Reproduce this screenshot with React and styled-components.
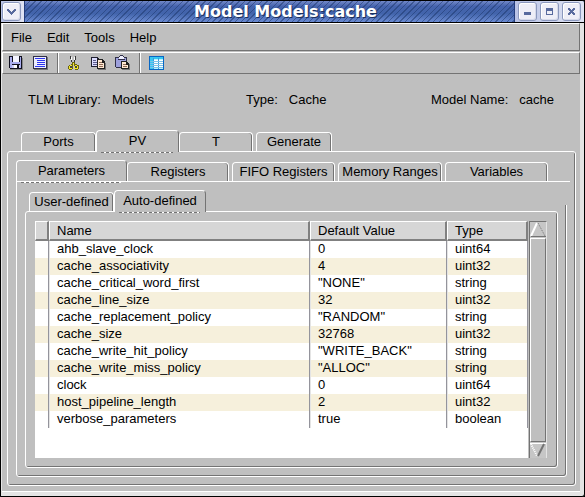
import React from 'react';
import styled, { createGlobalStyle, css } from 'styled-components';

const face = '#bfbfbf';
const dark = '#737373';

const GlobalStyle = createGlobalStyle`
  *, *::before, *::after { box-sizing: border-box; }
  body { margin: 0; background: #000; }
  button { font: inherit; color: inherit; }
`;

const Window = styled.main`
  min-height: 100vh;
  display: flex;
  flex-direction: column;
  border: 1px solid #000;
  border-radius: 0 3px 3px 0;
  background: #e4e4e4;
  color: #000;
  font: 13px/17px "Liberation Sans", Arial, sans-serif;
  overflow: hidden;
`;

const TitleBar = styled.header`
  display: flex;
  height: 22px;
  border-bottom: 1px solid #000;
  background:
    repeating-linear-gradient(135deg, rgba(27, 53, 105, 0.5) 0 1px, transparent 1px 4px),
    linear-gradient(#7389c9, #4563ad 25%, #4264ab 60%, #6b8bd2);
`;

const TitleButtons = styled.div`
  display: flex;
  gap: 3px;
  padding: ${(p) => (p.$end ? '1px 3px 1px 3px' : '1px 3px 1px 1px')};
  background: linear-gradient(90deg, #b9c3e6, #e0e4f4);
  border: 0 solid #233c7c;
  border-width: ${(p) => (p.$end ? '0 0 0 1px' : '0 1px 0 0')};
`;

const TitleButton = styled.button`
  display: flex;
  align-items: center;
  justify-content: center;
  width: 19px;
  height: 19px;
  padding: 0;
  border: 1px solid #8b98be;
  border-radius: 3px;
  background: #eeeef7;
  box-shadow: inset 1px 1px #fff, inset -1px -1px #d5d9ea;
`;

const Title = styled.h1`
  flex: 1;
  margin: 0;
  padding-left: 32px;
  text-align: center;
  color: #fff;
  font: bold 16px/21px "DejaVu Sans", Verdana, sans-serif;
  text-shadow: 1px 1px #1c2f5c;
  white-space: nowrap;
`;

const Body = styled.div`
  flex: 1;
  display: flex;
  flex-direction: column;
  margin: 0 4px 4px 1px;
  background: ${face};
  border-bottom: 1px solid #fff;
`;

const bar = css`
  display: flex;
  align-items: center;
  border: 1px solid;
  border-color: #fff ${dark} ${dark} #fff;
`;

const MenuBar = styled.nav`
  ${bar}
  height: 28px;
  padding: 0 8px;
  gap: 15px;
  margin-bottom: 1px;
`;

const MenuItem = styled.button`
  border: 0;
  padding: 0;
  background: none;
`;

const ToolBar = styled.div`
  ${bar}
  height: 22px;
  padding: 0 6px;
  gap: 8px;
`;

const ToolButton = styled.button`
  display: block;
  width: 16px;
  height: 16px;
  padding: 0;
  border: 0;
  background: none;
`;

const Separator = styled.span`
  width: 2px;
  align-self: stretch;
  background: linear-gradient(90deg, ${dark} 50%, #fff 50%);
`;

const Info = styled.dl`
  display: grid;
  grid-template-columns: 218fr 185fr auto;
  margin: 17px 26px 22px;
`;

const Pair = styled.div`
  display: flex;
  gap: 11px;
  dd, dt { margin: 0; }
`;

const Notebook = styled.section`
  flex: 1;
  display: flex;
  flex-direction: column;
  margin: ${(p) => (p.$outer ? '0 4px 5px 5px' : '0')};
`;

const TabList = styled.div`
  display: flex;
  align-items: flex-end;
  height: 21px;
  padding-left: ${(p) => p.$inset}px;
`;

const Tab = styled.button`
  width: ${(p) => p.$width}px;
  height: 19px;
  margin: 0 ${(p) => p.$gap || 0}px 0 0;
  padding: 0 0 2px;
  border: 1px solid #fff;
  border-bottom: 0;
  border-radius: 4px 4px 0 0;
  background: ${face};
  box-shadow: inset -1px 0 ${dark};
  line-height: 15px;
  white-space: nowrap;

  &[aria-selected='true'] {
    position: relative;
    height: 22px;
    margin-bottom: -1px;
    border-right-color: ${dark};
    box-shadow: none;
  }

  &[aria-selected='true']::after {
    content: '';
    position: absolute;
    left: 4px;
    right: 5px;
    bottom: -1px;
    height: 1px;
    background: repeating-linear-gradient(90deg, ${dark} 0 3px, #fff 3px 5px);
  }
`;

const Panel = styled.div`
  flex: 1;
  display: flex;
  flex-direction: column;
  border: 1px solid #fff;
  border-radius: ${(p) => (p.$open ? '0 0 3px 3px' : '3px')};
  box-shadow: inset -1px -1px ${dark};
  padding: ${(p) => p.$pad};

  ${(p) => p.$open && css`
    position: relative;
    &::after {
      content: '';
      position: absolute;
      top: -1px;
      right: -4px;
      width: 5px;
      height: 24px;
      border-top: 1px solid #fff;
      background: ${face};
    }
  `}
`;

const TableArea = styled.div`
  flex: 1;
  display: flex;
`;

const TableView = styled.div`
  flex: 1;
  background: #fff;
`;

const Table = styled.table`
  width: 100%;
  table-layout: fixed;
  border-collapse: separate;
  border-spacing: 0;
`;

const Col = styled.col`
  width: ${(p) => (p.$width ? `${p.$width}px` : 'auto')};
`;

const HeadCell = styled.th`
  height: 20px;
  padding: 0 0 0 7px;
  text-align: left;
  font-weight: normal;
  line-height: 17px;
  background: #d6d6d6;
  border: solid;
  border-width: 1px 2px 2px 1px;
  border-color: #fff #808080 #808080 #fff;
`;

const Row = styled.tr`
  &:nth-child(even) { background: #f6f0dc; }
`;

const Cell = styled.td`
  height: 17px;
  padding: 0 0 2px 7px;
  line-height: 15px;
  white-space: nowrap;
  border-left: 1px solid #e4e4e4;
  border-right: 1px solid #94949c;
  &:first-child { border-left: 0; }
`;

const ScrollBar = styled.div`
  display: flex;
  flex-direction: column;
  width: 18px;
  margin-left: 1px;
  border: 1px solid;
  border-width: 1px 1px 0 1px;
  border-color: ${dark} #e4e4e4 #e4e4e4 ${dark};
  background: #aaa;
`;

const Arrow = styled.button`
  display: block;
  height: 16px;
  padding: 0;
  border: 0;
  background: #c6c6c6;
`;

const Thumb = styled.div`
  flex: 1;
  background: ${face};
  border: 1px solid;
  border-color: #fff ${dark} ${dark} #fff;
`;

const Icon = styled.svg`
  display: block;
`;

const Svg = ({ size = 16, children }) => (
  <Icon width={size} height={size} viewBox={`0 0 ${size} ${size}`} shapeRendering="crispEdges" aria-hidden="true">
    {children}
  </Icon>
);

const SaveIcon = () => (
  <Svg>
    <path fill="#8a8a8a" d="M1 14h13v1H1zM13 3h1v12h-1z" />
    <path fill="#101020" d="M0 1h12l1 1v12H1l-1-1z" />
    <path fill="#a9acee" d="M1 2h2v11H1zM11 2h1v11h-1zM3 7h8v2H3z" />
    <path fill="#f4f4ff" d="M4 1h6v6H4z" />
    <path fill="#c9caf6" d="M3 10h8v3H3z" />
    <path fill="#fff" d="M5 10h3v3H5z" />
    <path fill="#101020" d="M4 9h6v1H4zM8 10h2v3H8zM3 2h1v5H3zM10 2h1v5h-1z" />
  </Svg>
);

const ListIcon = () => (
  <Svg>
    <path fill="#777" d="M1 14h14v1H1zM14 2h1v12h-1z" />
    <path fill="#303048" d="M0 1h14v13H0z" />
    <path fill="#ededff" d="M1 2h12v11H1z" />
    <path fill="#2e36ef" d="M2 3h10v1H2zM4 5h8v1H4zM4 7h8v1H4zM4 9h8v1H4zM2 11h10v1H2z" />
  </Svg>
);

const CutIcon = () => (
  <Svg>
    <path fill="#333" d="M3 1h1v3h1v3h1v2H5V7H4V4H3zM8 1h1v4H8v3H7V5h1z" />
    <path fill="#fff" d="M4 2h1v3H4zM7 2h1v3H7z" />
    <path fill="#6b6310" d="M5 7h3v2h2v1h2v4h-1v1H8v-1H7v-4H6v4H5v1H2v-1H1v-3h1v-1h2V9h1z" />
    <path fill="#f4e82a" d="M6 8h1v2H6zM3 10h2v1H3zM2 11h1v3H2zM3 13h2v1H3zM8 10h2v1H8zM10 11h1v3h-1zM7 11h1v3H7zM8 13h2v1H8z" />
    <path fill="#444" d="M3 11h2v2H3zM8 11h2v2H8z" />
  </Svg>
);

const CopyIcon = () => (
  <Svg>
    <path fill="#202030" d="M0 2h7l2 3v7H0z" />
    <path fill="#dcdcff" d="M1 3h5v3h2v5H1z" />
    <path fill="#5c5c8c" d="M2 5h3v1H2zM2 7h4v1H2zM2 9h4v1H2z" />
    <path fill="#202020" d="M6 4h6l2 3v7H6z" />
    <path fill="#ffe9d2" d="M7 5h4v3h2v5H7z" />
    <path fill="#8e6a58" d="M8 7h3v1H8zM8 9h4v1H8zM8 11h4v1H8z" />
    <path fill="#777" d="M7 14h8v1H7zM14 8h1v6h-1z" />
  </Svg>
);

const PasteIcon = () => (
  <Svg>
    <path fill="#303048" d="M0 2h4V1h1V0h3v1h1v1h3v11H1v-1H0z" />
    <path fill="#9da0dc" d="M1 3h10v9H1z" />
    <path fill="#f0f0ff" d="M4 2h5v2H4zM5 1h3v1H5z" />
    <path fill="#303048" d="M3 4h7v1H3z" />
    <path fill="#202020" d="M6 6h5l3 3v5H6z" />
    <path fill="#ffe9d2" d="M7 7h4v3h2v3H7z" />
    <path fill="#8e6a58" d="M8 9h3v1H8zM8 11h4v1H8z" />
    <path fill="#777" d="M7 14h8v1H7zM14 9h1v5h-1z" />
  </Svg>
);

const GridIcon = () => (
  <Svg>
    <path fill="#0867c4" d="M0 1h15v14H0z" />
    <path fill="#baf4ff" d="M1 4h13v10H1z" />
    <path fill="#35c8f2" d="M1 2h13v2H1zM1 4h3v10H1z" />
    <path fill="#fff" d="M5 5h4v1H5zM10 5h4v1h-4zM5 7h4v1H5zM10 7h4v1h-4zM5 9h4v1H5zM10 9h4v1h-4zM5 11h4v1H5zM10 11h4v1h-4z" />
    <path fill="#3a9bdc" d="M4 3h1v11H4zM9 3h1v11H9z" />
    <path fill="#7cc4ea" d="M1 6h13v1H1zM1 8h13v1H1zM1 10h13v1H1zM1 12h13v1H1z" />
  </Svg>
);

const glyph = '#586a9e';
const WindowMenuGlyph = () => (
  <Svg size={11}><path fill={glyph} d="M1 3h2v1h1v1h1v1h1V5h1V4h1V3h2v2H9v1H8v1H7v1H6v1H5V8H4V7H3V6H2V5H1z" /></Svg>
);
const MinimizeGlyph = () => <Svg size={11}><path fill={glyph} d="M2 6h7v3H2z" /></Svg>;
const MaximizeGlyph = () => (
  <Svg size={11}><path fill={glyph} fillRule="evenodd" d="M2 2h7v7H2zM3 5v3h5V5z" /></Svg>
);
const CloseGlyph = () => (
  <Svg size={11}><path fill={glyph} d="M2 2h2v1h1v1h1V3h1V2h2v2H8v1H7v1h1v1h1v2H7V8H6V7H5v1H4v1H2V7h1V6h1V5H3V4H2z" /></Svg>
);

const ScrollUp = () => (
  <Icon width="16" height="16" viewBox="0 0 16 16" aria-hidden="true">
    <path d="M7 1L1 14" stroke="#fff" strokeWidth="2" fill="none" />
    <path d="M8 1L15 14" stroke={dark} strokeDasharray="1 1" fill="none" />
    <path d="M1 14.5h15" stroke={dark} fill="none" />
  </Icon>
);
const ScrollDown = () => (
  <Icon width="16" height="16" viewBox="0 0 16 16" aria-hidden="true">
    <path d="M0 1.5h16" stroke="#fff" fill="none" />
    <path d="M1 2L7 14" stroke="#fff" strokeWidth="2" strokeDasharray="1 1" fill="none" />
    <path d="M14 2L8 14" stroke={dark} strokeWidth="2" fill="none" />
  </Icon>
);

const rows = [
  ['ahb_slave_clock', '0', 'uint64'],
  ['cache_associativity', '4', 'uint32'],
  ['cache_critical_word_first', '"NONE"', 'string'],
  ['cache_line_size', '32', 'uint32'],
  ['cache_replacement_policy', '"RANDOM"', 'string'],
  ['cache_size', '32768', 'uint32'],
  ['cache_write_hit_policy', '"WRITE_BACK"', 'string'],
  ['cache_write_miss_policy', '"ALLOC"', 'string'],
  ['clock', '0', 'uint64'],
  ['host_pipeline_length', '2', 'uint32'],
  ['verbose_parameters', 'true', 'boolean'],
];

const Tabs = ({ label, inset, tabs }) => (
  <TabList role="tablist" aria-label={label} $inset={inset}>
    {tabs.map(([text, width, gap, selected]) => (
      <Tab key={text} type="button" role="tab" aria-selected={!!selected} $width={width} $gap={gap}>
        {text}
      </Tab>
    ))}
  </TabList>
);

export default function App() {
  return (
    <>
      <GlobalStyle />
      <Window>
        <TitleBar>
          <TitleButtons>
            <TitleButton aria-label="Window menu"><WindowMenuGlyph /></TitleButton>
          </TitleButtons>
          <Title>Model Models:cache</Title>
          <TitleButtons $end>
            <TitleButton aria-label="Minimize"><MinimizeGlyph /></TitleButton>
            <TitleButton aria-label="Maximize"><MaximizeGlyph /></TitleButton>
            <TitleButton aria-label="Close"><CloseGlyph /></TitleButton>
          </TitleButtons>
        </TitleBar>
        <Body>
          <MenuBar>
            {['File', 'Edit', 'Tools', 'Help'].map((m) => <MenuItem key={m}>{m}</MenuItem>)}
          </MenuBar>
          <ToolBar role="toolbar">
            <ToolButton aria-label="Save"><SaveIcon /></ToolButton>
            <ToolButton aria-label="Properties"><ListIcon /></ToolButton>
            <Separator />
            <ToolButton aria-label="Cut"><CutIcon /></ToolButton>
            <ToolButton aria-label="Copy"><CopyIcon /></ToolButton>
            <ToolButton aria-label="Paste"><PasteIcon /></ToolButton>
            <Separator />
            <ToolButton aria-label="Table"><GridIcon /></ToolButton>
          </ToolBar>
          <Info>
            <Pair><dt>TLM Library:</dt><dd>Models</dd></Pair>
            <Pair><dt>Type:</dt><dd>Cache</dd></Pair>
            <Pair><dt>Model Name:</dt><dd>cache</dd></Pair>
          </Info>
          <Notebook $outer>
            <Tabs label="Views" inset={14} tabs={[['Ports', 75, 0], ['PV', 83, 0, true], ['T', 74, 3], ['Generate', 76, 0]]} />
            <Panel $pad="8px">
              <Notebook>
                <Tabs
                  label="PV sections"
                  inset={0}
                  tabs={[['Parameters', 111, 0, true], ['Registers', 102, 3], ['FIFO Registers', 103, 3], ['Memory Ranges', 104, 3], ['Variables', 103, 0]]}
                />
                <Panel $open $pad="8px">
                  <Notebook>
                    <Tabs label="Parameter groups" inset={4} tabs={[['User-defined', 85, 0], ['Auto-defined', 92, 0, true]]} />
                    <Panel $pad="9px 10px 9px 9px">
                      <TableArea>
                        <TableView>
                          <Table>
                            <colgroup>
                              <Col $width={14} />
                              <Col />
                              <Col $width={137} />
                              <Col $width={81} />
                            </colgroup>
                            <thead>
                              <tr>
                                <HeadCell aria-label="Marker" />
                                <HeadCell>Name</HeadCell>
                                <HeadCell>Default Value</HeadCell>
                                <HeadCell>Type</HeadCell>
                              </tr>
                            </thead>
                            <tbody>
                              {rows.map(([name, value, type]) => (
                                <Row key={name}>
                                  <Cell />
                                  <Cell>{name}</Cell>
                                  <Cell>{value}</Cell>
                                  <Cell>{type}</Cell>
                                </Row>
                              ))}
                            </tbody>
                          </Table>
                        </TableView>
                        <ScrollBar>
                          <Arrow aria-label="Scroll up"><ScrollUp /></Arrow>
                          <Thumb />
                          <Arrow aria-label="Scroll down"><ScrollDown /></Arrow>
                        </ScrollBar>
                      </TableArea>
                    </Panel>
                  </Notebook>
                </Panel>
              </Notebook>
            </Panel>
          </Notebook>
        </Body>
      </Window>
    </>
  );
}
